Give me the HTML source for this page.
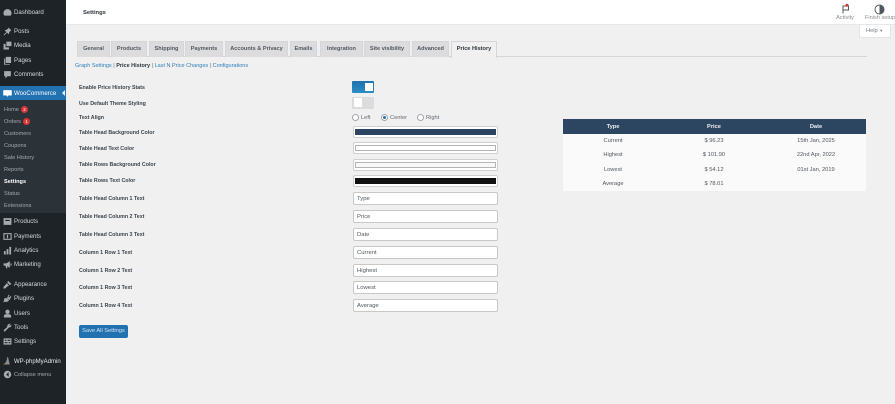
<!DOCTYPE html>
<html><head><meta charset="utf-8"><style>
html,body{margin:0;padding:0}
body{width:895px;height:404px;overflow:hidden;background:#f0f0f1;position:relative;font-family:"Liberation Sans","DejaVu Sans",sans-serif;font-size:5.8px;color:#3c434a}
#w{position:absolute;left:0;top:0;width:895px;height:404px;overflow:hidden;filter:blur(.3px)}
.a,.m,.s,.t,.l,.i,.c,.d{position:absolute;white-space:nowrap}
#side{position:absolute;left:0;top:0;width:66px;height:404px;background:#1d2327}
#sub{position:absolute;left:0;top:100px;width:66px;height:113px;background:#2c3338}
#wc{position:absolute;left:0;top:86px;width:66px;height:14px;background:#2271b1}
.m{left:14px;color:#d5d8db;font-size:6.1px;line-height:10px;height:10px;margin-top:.6px}
.s{left:4px;color:#a4a9ae;font-size:5.6px;line-height:10px;height:10px;margin-top:.8px}
.ic{position:absolute;left:2.5px;width:9px;height:9px;fill:#a7aaad;margin-top:-.5px}
.t{top:41px;height:15px;line-height:15.500px;text-align:center;background:#dcdcde;border:1px solid #d6d6d8;border-bottom:0;font-weight:bold;color:#50575e;font-size:5.6px;box-sizing:content-box}
.l{left:79px;font-weight:bold;color:#3c434a;font-size:5.3px;line-height:10px;height:10px;margin-top:.6px}
.i{left:353px;width:145px;height:13px;box-sizing:border-box;background:#fff;border:1px solid #c8c8c8;border-radius:2px;line-height:12px;padding-left:3px;font-size:5.900px;color:#50575e}
.c{left:353px;width:145px;height:12px;box-sizing:border-box;background:#fff;border:1px solid #cfcfcf;border-radius:2px;padding:2px 1px}
.c b{display:block;height:6px;box-sizing:border-box;border:1px solid #b4b4b4}
.d{text-align:center;width:100px;font-size:5.700px;line-height:10px;color:#50575e}
</style></head><body><div id="w">
<div id="side"></div><div id="sub"></div><div id="wc"></div>
<div class="a" style="left:66px;top:90px;width:0;height:0;border:3.5px solid transparent;border-right-color:#f0f0f1;margin-left:-7px"></div>

<svg class="ic" style="top:8px" viewBox="0 0 8 8"><path d="M4 1a3.600 3.600 0 0 0-3.600 3.600c0 1 .4 1.700.8 2.200h5.600c.4-.5.8-1.200.8-2.200A3.600 3.600 0 0 0 4 1z"/></svg>
<div class="m" style="top:7px">Dashboard</div>
<svg class="ic" style="top:27px" viewBox="0 0 8 8"><path d="M5 .5l2.500 2.500-1 .5-1 1.500-.3 1.500L3.500 5 1 7.500.5 7 3 4.500 1.400 2.800l1.500-.3 1.500-1z"/></svg>
<div class="m" style="top:26px">Posts</div>
<svg class="ic" style="top:41px" viewBox="0 0 8 8"><path d="M3 .5h4.500v4H3zM.5 2.500h1.800v3.200h3V7.500H.5z"/></svg>
<div class="m" style="top:40px">Media</div>
<svg class="ic" style="top:56px" viewBox="0 0 8 8"><path d="M2.500.8h4.700v5.400H2.500zM1 2.200h1v5h4v.6H1z"/></svg>
<div class="m" style="top:55px">Pages</div>
<svg class="ic" style="top:70px" viewBox="0 0 8 8"><path d="M1 1h6v4.500H4L2.200 7.500v-2H1z"/></svg>
<div class="m" style="top:69px">Comments</div>
<svg class="ic" style="top:89px;fill:#fff" viewBox="0 0 8 8"><path d="M.8 1h6.400a.6.600 0 0 1 .6.600v3.600a.6.600 0 0 1-.6.600H4.600L3.800 7.200 3.400 5.800H.8a.6.600 0 0 1-.6-.6V1.600A.6.600 0 0 1 .8 1z"/></svg>
<div class="m" style="top:88px;color:#fff">WooCommerce</div>

<div class="s" style="top:104px">Home</div>
<div class="a" style="left:21px;top:106px;width:7px;height:7px;border-radius:50%;background:#d63638;color:#fff;font-size:4.500px;line-height:7px;text-align:center">2</div>
<div class="s" style="top:116px">Orders</div>
<div class="a" style="left:23px;top:118px;width:7px;height:7px;border-radius:50%;background:#d63638;color:#fff;font-size:4.500px;line-height:7px;text-align:center">1</div>
<div class="s" style="top:128px">Customers</div>
<div class="s" style="top:140px">Coupons</div>
<div class="s" style="top:152px">Sale History</div>
<div class="s" style="top:164px">Reports</div>
<div class="s" style="top:176px;color:#fff;font-weight:bold">Settings</div>
<div class="s" style="top:188px">Status</div>
<div class="s" style="top:200px">Extensions</div>

<svg class="ic" style="top:217px" viewBox="0 0 8 8"><path d="M.5 1h7v6h-7zM2 2.500v1h4v-1z" fill-rule="evenodd"/></svg>
<div class="m" style="top:216px">Products</div>
<svg class="ic" style="top:232px" viewBox="0 0 8 8"><path d="M.3 1h7.400v6H.3zM1.300 2v4h5.400V2zM3.500 2.500h1v3h-1z" fill-rule="evenodd"/></svg>
<div class="m" style="top:231px">Payments</div>
<svg class="ic" style="top:246px" viewBox="0 0 8 8"><path d="M.8 4.500h1.600v3H.8zM3.200 2.800h1.600v4.700H3.200zM5.600.8h1.600v6.700H5.600z"/></svg>
<div class="m" style="top:245px">Analytics</div>
<svg class="ic" style="top:260px" viewBox="0 0 8 8"><path d="M.5 3h2.500L6 1v6L3.500 5.300l.5 2H2.800L2.200 5H.5zM6.600 3h1v2h-1z"/></svg>
<div class="m" style="top:259px">Marketing</div>

<svg class="ic" style="top:280px" viewBox="0 0 8 8"><path d="M4.500.8L7.500 3.500 6 4.500 3.800 2.200zM3.300 2.800L5.300 5 3.500 6 2 7.500H.5V6l1.500-1.500z"/></svg>
<div class="m" style="top:279px">Appearance</div>
<svg class="ic" style="top:294px" viewBox="0 0 8 8"><path d="M5 .5l.8.5-1 1.500 1 .7 1-1.500.7.500-1 1.700-.5 1.500-2.500-1.500zM3 3.500L5.500 6 3.500 7H1L.5 7.500.2 7 1 6V4z"/></svg>
<div class="m" style="top:293px">Plugins</div>
<svg class="ic" style="top:309px" viewBox="0 0 8 8"><circle cx="4" cy="2.500" r="1.900"/><path d="M.8 7.500V6.200C.8 5 2 4.600 4 4.600s3.200.4 3.200 1.600v1.300z"/></svg>
<div class="m" style="top:308px">Users</div>
<svg class="ic" style="top:323px" viewBox="0 0 8 8"><path d="M6.800.8L5.500 2l.5.600 1.300-1.200c.4 1 0 2-1 2.400l-1 .1L2 7.200a.7.700 0 0 1-1.200-1L3.800 3.400V2.500C4 1.200 5.600.3 6.800.8z"/></svg>
<div class="m" style="top:322px">Tools</div>
<svg class="ic" style="top:337px" viewBox="0 0 8 8"><path d="M.5 1.200h7v5.600h-7zM1.500 2.400v1h1.500v-1zM4 2.400v1h2.500v-1zM1.500 4.500v1H4v-1zM5 4.500v1h1.500v-1z" fill-rule="evenodd"/></svg>
<div class="m" style="top:336px">Settings</div>
<svg class="ic" style="top:356px" viewBox="0 0 8 8"><path d="M3.800 1h.7L6 7.500H.5C2 6.800 3.300 4.500 3.800 1z" fill="#8a8d90"/><path d="M.5 7h3v.6H.5z" style="fill:#b5822e"/></svg>
<div class="m" style="top:356px;color:#e8eaec;font-size:6px">WP-phpMyAdmin</div>
<svg class="ic" style="top:370px" viewBox="0 0 8 8"><circle cx="4" cy="4" r="3.300"/><path d="M5 2L2.800 4 5 6z" fill="#1d2327"/></svg>
<div class="m" style="top:369px;color:#a7aaad;font-size:5.600px">Collapse menu</div>

<div class="a" style="left:66px;top:0;width:829px;height:25px;background:#fff;border-bottom:1px solid #e8e8ea;box-sizing:border-box"></div>
<div class="a" style="left:83px;top:8px;font-weight:bold;font-size:5.800px;line-height:10px;color:#2c3338">Settings</div>
<svg class="a" style="left:841px;top:3px;width:10px;height:11px" viewBox="0 0 10 11"><path d="M2 2.500v8M2 3h5.500v4H2" fill="none" stroke="#50575e" stroke-width="1"/><circle cx="6" cy="2.200" r="1.500" fill="#d63638"/></svg>
<div class="a" style="left:836px;top:13px;font-size:5.700px;line-height:10px;color:#8a8d90">Activity</div>
<svg class="a" style="left:874px;top:4px;width:11px;height:11px" viewBox="0 0 11 11"><circle cx="5.500" cy="5.500" r="4.500" fill="#fff" stroke="#50575e" stroke-width="1"/><path d="M5.500 1a4.500 4.500 0 0 1 0 9z" fill="#50575e"/></svg>
<div class="a" style="left:865px;top:13px;font-size:5.600px;line-height:10px;color:#8a8d90">Finish setup</div>
<div class="a" style="left:859px;top:25px;width:32px;height:13px;background:#fff;border:1px solid #e4e4e6;border-top:0;box-sizing:border-box;border-radius:0 0 2px 2px;line-height:12px;font-size:5.700px;color:#7a8086;padding-left:6px">Help <span style="font-size:4px">▼</span></div>

<div class="a" style="left:77px;top:56px;width:790px;height:1px;background:#d6d6d8"></div>
<div class="t" style="left:77px;width:31px">General</div>
<div class="t" style="left:111px;width:34px">Products</div>
<div class="t" style="left:149px;width:33px">Shipping</div>
<div class="t" style="left:185px;width:36px">Payments</div>
<div class="t" style="left:225px;width:61px">Accounts &amp; Privacy</div>
<div class="t" style="left:290px;width:25px">Emails</div>
<div class="t" style="left:320px;width:41px">Integration</div>
<div class="t" style="left:364px;width:44px">Site visibility</div>
<div class="t" style="left:412px;width:35px">Advanced</div>
<div class="t" style="left:451px;width:44px;background:#f0f0f1;color:#2c3338;height:16px">Price History</div>

<div class="a" style="left:75px;top:61px;font-size:5.500px;line-height:10px;color:#646970"><span style="color:#2f7fb8">Graph Settings</span> | <b style="color:#2c3338">Price History</b> | <span style="color:#2f7fb8">Last N Price Changes</span> | <span style="color:#2f7fb8">Configurations</span></div>

<div class="l" style="top:82px">Enable Price History Stats</div>
<div class="l" style="top:98px">Use Default Theme Styling</div>
<div class="l" style="top:112px">Text Align</div>
<div class="l" style="top:127px">Table Head Background Color</div>
<div class="l" style="top:143px">Table Head Text Color</div>
<div class="l" style="top:159px">Table Rows Background Color</div>
<div class="l" style="top:175px">Table Rows Text Color</div>
<div class="l" style="top:193px">Table Head Column 1 Text</div>
<div class="l" style="top:211px">Table Head Column 2 Text</div>
<div class="l" style="top:229px">Table Head Column 3 Text</div>
<div class="l" style="top:247px">Column 1 Row 1 Text</div>
<div class="l" style="top:265px">Column 1 Row 2 Text</div>
<div class="l" style="top:282px">Column 1 Row 3 Text</div>
<div class="l" style="top:300px">Column 1 Row 4 Text</div>

<div class="a" style="left:352px;top:81px;width:22px;height:12px;border-radius:1px;background:linear-gradient(#1f72ad,#2a8fc4)"></div>
<div class="a" style="left:365px;top:83px;width:8px;height:8px;background:#fff"></div>
<div class="a" style="left:352px;top:97px;width:22px;height:12px;background:#dcdcde;border-radius:1px"></div>
<div class="a" style="left:354px;top:98px;width:8px;height:9px;background:#fff"></div>

<div class="a" style="left:352px;top:114px;border:1px solid #a0a3a8;border-radius:50%;background:#fff;width:5px;height:5px"></div>
<div class="a" style="left:361px;top:112.500px;font-size:5.700px;line-height:10px;color:#646970">Left</div>
<div class="a" style="left:381px;top:114px;width:5px;height:5px;border:1px solid #a0a3a8;border-radius:50%;background:#fff"></div>
<div class="a" style="left:383px;top:116px;width:3px;height:3px;border-radius:50%;background:#2271b1"></div>
<div class="a" style="left:390px;top:112.500px;font-size:5.700px;line-height:10px;color:#646970">Center</div>
<div class="a" style="left:417px;top:114px;width:5px;height:5px;border:1px solid #a0a3a8;border-radius:50%;background:#fff"></div>
<div class="a" style="left:426px;top:112.500px;font-size:5.700px;line-height:10px;color:#646970">Right</div>

<div class="c" style="top:126px"><b style="background:#2c4560;border-color:#2c4560"></b></div>
<div class="c" style="top:142px"><b style="background:#fff"></b></div>
<div class="c" style="top:159px"><b style="background:#f8f8f8"></b></div>
<div class="c" style="top:175px"><b style="background:#111;border-color:#111"></b></div>
<div class="i" style="top:192px">Type</div>
<div class="i" style="top:210px">Price</div>
<div class="i" style="top:228px">Date</div>
<div class="i" style="top:246px">Current</div>
<div class="i" style="top:264px">Highest</div>
<div class="i" style="top:281px">Lowest</div>
<div class="i" style="top:299px">Average</div>

<div class="a" style="left:79px;top:325px;width:49px;height:13px;background:#2271b1;border-radius:2px;color:#d5e3ef;font-size:5.700px;line-height:13px;text-align:center">Save All Settings</div>

<div class="a" style="left:563px;top:119px;width:303px;height:72px;background:#fafafa"></div>
<div class="a" style="left:563px;top:119px;width:303px;height:15px;background:#2c4560"></div>
<div class="d" style="left:563px;top:121.500px;color:#f0f0f1;font-weight:bold">Type</div>
<div class="d" style="left:664px;top:121.500px;color:#f0f0f1;font-weight:bold">Price</div>
<div class="d" style="left:766px;top:121.500px;color:#f0f0f1;font-weight:bold">Date</div>
<div class="d" style="left:563px;top:135.500px">Current</div>
<div class="d" style="left:664px;top:135.500px">$ 96.23</div>
<div class="d" style="left:766px;top:135.500px">15th Jan, 2025</div>
<div class="d" style="left:563px;top:150px">Highest</div>
<div class="d" style="left:664px;top:150px">$ 101.90</div>
<div class="d" style="left:766px;top:150px">22nd Apr, 2022</div>
<div class="d" style="left:563px;top:164.500px">Lowest</div>
<div class="d" style="left:664px;top:164.500px">$ 54.12</div>
<div class="d" style="left:766px;top:164.500px">01st Jan, 2019</div>
<div class="d" style="left:563px;top:179px">Average</div>
<div class="d" style="left:664px;top:179px">$ 78.01</div>
</div></body></html>
